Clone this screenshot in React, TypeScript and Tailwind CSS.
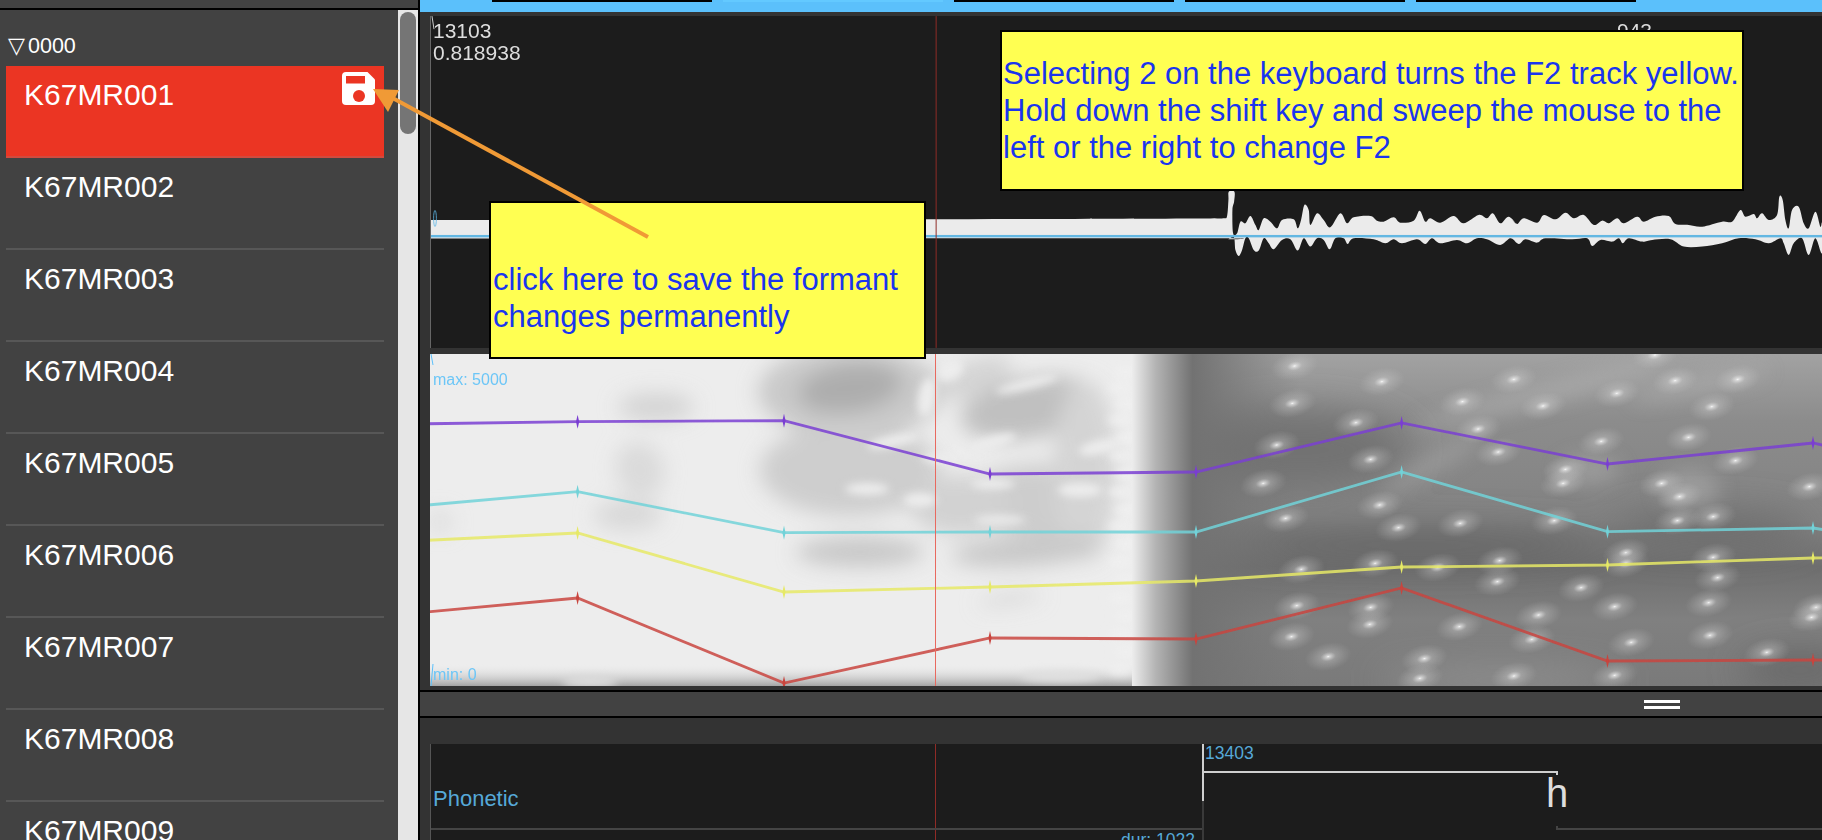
import React from 'react';

const FONT = "font-['Liberation_Sans',Arial,sans-serif]";

const names = ['K67MR001', 'K67MR002', 'K67MR003', 'K67MR004', 'K67MR005', 'K67MR006', 'K67MR007', 'K67MR008', 'K67MR009'];

// waveform envelopes, read off the picture: [x, y] in 3x crop coords
const topA = [[0,85],[40,85],[50,78],[54,30],[55,5],[72,5],[71,35],[66,60],[68,130],[80,130],[90,95],[105,100],[120,78],[135,105],[145,120],[160,85],[180,95],[200,115],[215,90],[250,88],[262,115],[272,90],[282,45],[295,60],[300,105],[320,70],[340,90],[360,112],[390,70],[410,100],[430,82],[480,78],[500,92],[520,95],[550,82],[570,98],[610,92],[628,62],[645,95],[660,85],[690,98],[730,78],[760,100],[805,75],[830,85],[848,70],[870,100],[895,80],[920,102]];
const topB = [[0,88],[15,102],[35,85],[75,98],[95,75],[130,88],[160,68],[185,85],[215,75],[245,105],[270,92],[290,100],[315,85],[335,100],[375,80],[395,95],[430,80],[470,78],[490,102],[530,105],[570,110],[630,95],[660,95],[685,60],[700,80],[725,72],[735,85],[750,70],[770,90],[795,75],[802,20],[812,30],[820,90],[830,115],[840,60],[860,50],[875,100],[890,115],[910,65],[925,110],[930,100]];
const botA = [[0,145],[50,148],[70,140],[75,180],[85,198],[95,180],[105,145],[115,145],[130,180],[145,182],[160,145],[175,160],[190,178],[215,150],[240,148],[262,182],[280,145],[300,170],[320,145],[340,150],[358,178],[375,145],[400,145],[412,162],[430,145],[490,148],[525,160],[550,148],[575,160],[620,148],[645,162],[665,145],[690,160],[740,150],[770,160],[800,145],[830,148],[870,165],[900,145],[920,160]];
const botB = [[0,145],[20,162],[40,148],[75,158],[100,145],[180,148],[225,145],[240,168],[265,150],[300,155],[320,145],[332,160],[350,145],[390,155],[420,150],[475,148],[515,170],[570,170],[630,160],[680,145],[730,148],[770,160],[805,145],[815,160],[830,195],[845,160],[870,145],[890,195],[910,145],[930,190]];

const toPx = (pts: number[][], ox: number) => pts.map(([x, y]) => [ox + x / 3, 190 + y / 3]);

// catmull-rom outline so the curve still reaches every peak
function smoothPath(pts: number[][]) {
  let d = `M${pts[0][0]},${pts[0][1]}`;
  for (let i = 0; i < pts.length - 1; i++) {
    const p0 = pts[Math.max(i - 1, 0)];
    const p1 = pts[i];
    const p2 = pts[i + 1];
    const p3 = pts[Math.min(i + 2, pts.length - 1)];
    const c1 = [p1[0] + (p2[0] - p0[0]) / 6, p1[1] + (p2[1] - p0[1]) / 6];
    const c2 = [p2[0] - (p3[0] - p1[0]) / 6, p2[1] - (p3[1] - p1[1]) / 6];
    d += ` C${c1[0]},${c1[1]} ${c2[0]},${c2[1]} ${p2[0]},${p2[1]}`;
  }
  return `${d} Z`;
}

const wavePath = smoothPath([
  [430, 220],
  [820, 219.5],
  [1210, 218.5],
  ...toPx(topA, 1210),
  ...toPx(topB, 1512),
  ...toPx(botB, 1512).reverse(),
  ...toPx(botA, 1210).reverse(),
  [820, 238.5],
  [430, 238.5],
]);

const formantX = [372, 577.6, 784, 990, 1196, 1401.6, 1607.5, 1813, 2019];
const formants = [
  { color: '#7a3ed2', ys: [424.5, 421.7, 420.7, 474, 472, 423, 464, 443, 490] },
  { color: '#72d2d8', ys: [510, 491.7, 532.7, 532, 532, 472, 531.7, 528, 560] },
  { color: '#e6e966', ys: [543, 533, 592, 587, 581, 567, 565, 558, 556] },
  { color: '#c9443e', ys: [617, 598, 683, 638, 639, 588, 661, 660, 664] },
];

// gray clouds in the light part of the spectrogram: cx cy rx ry fill rotate
const clouds: [number, number, number, number, string, number][] = [
  [850, 392, 92, 46, '#c9c9c9', 0],
  [850, 388, 52, 24, '#adadad', -8],
  [850, 470, 90, 46, '#cecece', 0],
  [860, 552, 64, 15, '#c8c8c8', 0],
  [1030, 408, 70, 30, '#c0c0c0', -10],
  [975, 378, 40, 18, '#d4d4d4', -20],
  [1040, 500, 74, 36, '#cdcdcd', 0],
  [960, 505, 50, 30, '#d2d2d2', 0],
  [1085, 470, 32, 90, '#d4d4d4', 0],
  [1027, 551, 76, 15, '#c8c8c8', -4],
  [1010, 599, 32, 5, '#d6d6d6', -8],
  [656, 407, 38, 14, '#d4d4d4', 0],
  [640, 470, 24, 28, '#dadada', -20],
  [628, 515, 34, 15, '#d8d8d8', 0],
  [440, 522, 12, 10, '#dcdcdc', 0],
];

const holes: [number, number, number, number, number][] = [
  [867, 489, 22, 6, 0],
  [893, 441, 26, 6, -12],
  [920, 500, 17, 7, 0],
  [927, 397, 9, 20, 10],
  [1027, 384, 32, 5, -14],
  [993, 442, 24, 6, -15],
  [1100, 447, 22, 7, -12],
  [993, 484, 22, 5, 0],
  [1080, 490, 22, 7, 0],
  [940, 458, 18, 5, 0],
  [1000, 520, 26, 4, 0],
  [950, 370, 14, 10, -30],
];

// bright specks in the voiced part, in crop coords of the right half
const specks = [[390,48],[585,95],[880,88],[1240,92],[1380,88],[1195,15],[385,160],[765,155],[945,168],[1110,130],[1322,170],[527,218],[800,237],[1075,274],[1270,262],[350,285],[845,306],[560,328],[1375,332],[995,358],[320,400],[990,400],[1210,400],[1540,410],[1250,440],[580,465],[370,505],[970,512],[1245,512],[1325,500],[622,533],[760,520],[1130,608],[1325,622],[1130,640],[405,658],[570,640],[848,632],[710,652],[1335,683],[843,695],[1030,713],[395,767],[560,772],[935,795],[1105,770],[1315,758],[1555,772],[1545,802],[558,823],[758,830],[383,860],[920,868],[1142,877],[1318,856],[465,920],[680,926],[1445,907],[670,985],[880,978],[1105,976]];

const lumps = [372, 388, 404, 420, 438, 456, 474, 492, 510, 526, 544, 562, 580, 598, 616, 634, 652, 670];

function Spectrogram() {
  return (
    <svg className="absolute inset-0 w-full h-full" viewBox="430 354 1392 332">
      <defs>
        <filter id="soft" x="-40%" y="-80%" width="180%" height="260%"><feGaussianBlur stdDeviation="10" /></filter>
        <filter id="b4" x="-40%" y="-80%" width="180%" height="260%"><feGaussianBlur stdDeviation="4" /></filter>
        <filter id="wide" x="-40%" y="-80%" width="180%" height="260%"><feGaussianBlur stdDeviation="18" /></filter>
        <filter id="line" x="-5%" y="-5%" width="110%" height="110%"><feGaussianBlur stdDeviation="0.6" /></filter>
        <linearGradient id="voiced" x1="0" y1="0" x2="0" y2="1">
          <stop offset="0" stopColor="#a2a2a2" />
          <stop offset="0.2" stopColor="#8c8c8c" />
          <stop offset="0.5" stopColor="#828282" />
          <stop offset="0.64" stopColor="#6e6e6e" />
          <stop offset="0.8" stopColor="#808080" />
          <stop offset="1" stopColor="#7a7a7a" />
        </linearGradient>
        <linearGradient id="edge" gradientUnits="userSpaceOnUse" x1="1132" y1="0" x2="1300" y2="0">
          <stop offset="0" stopColor="#ededed" />
          <stop offset="0.14" stopColor="#b4b4b4" />
          <stop offset="0.36" stopColor="#727272" />
          <stop offset="1" stopColor="#727272" stopOpacity="0" />
        </linearGradient>
        <linearGradient id="floor" x1="0" y1="0" x2="0" y2="1">
          <stop offset="0" stopColor="#ededed" stopOpacity="0" />
          <stop offset="1" stopColor="#a4a4a4" />
        </linearGradient>
        <radialGradient id="speck">
          <stop offset="0" stopColor="#ffffff" stopOpacity="0.95" />
          <stop offset="0.07" stopColor="#eeeeee" stopOpacity="0.75" />
          <stop offset="0.32" stopColor="#dddddd" stopOpacity="0.3" />
          <stop offset="1" stopColor="#cccccc" stopOpacity="0" />
        </radialGradient>
      </defs>
      <rect x="430" y="354" width="1392" height="332" fill="#ededed" />
      <g filter="url(#soft)">
        {clouds.map(([cx, cy, rx, ry, fill, r], i) => (
          <ellipse key={i} cx={cx} cy={cy} rx={rx} ry={ry} fill={fill} transform={`rotate(${r} ${cx} ${cy})`} />
        ))}
      </g>
      <g filter="url(#b4)">
        {holes.map(([cx, cy, rx, ry, r], i) => (
          <ellipse key={i} cx={cx} cy={cy} rx={rx} ry={ry} fill="#ededed" transform={`rotate(${r} ${cx} ${cy})`} />
        ))}
      </g>
      <rect x="430" y="664" width="720" height="22" fill="url(#floor)" />
      <g filter="url(#b4)">
        <ellipse cx="590" cy="682" rx="28" ry="6" fill="#dedede" />
        <ellipse cx="1060" cy="676" rx="40" ry="6" fill="#e0e0e0" />
      </g>
      <g filter="url(#b4)">
        {lumps.map((y, i) => (
          <ellipse key={y} cx={i % 2 ? 1120 : 1126} cy={y} rx="12" ry="5" fill="#f0f0f0" />
        ))}
      </g>
      <rect x="1132" y="354" width="690" height="332" fill="url(#voiced)" />
      <g filter="url(#wide)">
        <ellipse cx="1300" cy="450" rx="110" ry="40" fill="#727272" />
        <ellipse cx="1420" cy="545" rx="190" ry="14" fill="#646464" />
        <ellipse cx="1800" cy="670" rx="60" ry="18" fill="#666666" />
        <ellipse cx="1710" cy="530" rx="100" ry="18" fill="#6c6c6c" />
        <ellipse cx="1500" cy="680" rx="120" ry="12" fill="#949494" />
      </g>
      <g filter="url(#soft)" opacity="0.5">
        <ellipse cx="1540" cy="395" rx="130" ry="9" fill="#bdbdbd" transform="rotate(-14 1540 395)" />
        <ellipse cx="1700" cy="385" rx="70" ry="7" fill="#bdbdbd" transform="rotate(-12 1700 385)" />
        <ellipse cx="1430" cy="465" rx="60" ry="8" fill="#b0b0b0" transform="rotate(-30 1430 465)" />
        <ellipse cx="1690" cy="490" rx="30" ry="20" fill="#b4b4b4" />
        <ellipse cx="1590" cy="470" rx="30" ry="14" fill="#b0b0b0" />
      </g>
      <rect x="1132" y="354" width="168" height="332" fill="url(#edge)" />
      {specks.map(([zx, zy], i) => {
        const cx = 1120 + zx / 2.234;
        const cy = 350 + zy / 3;
        return <ellipse key={i} cx={cx} cy={cy} rx="24" ry="14" fill="url(#speck)" transform={`rotate(-12 ${cx} ${cy})`} />;
      })}
      <g filter="url(#line)">
        {formants.map((f) => (
          <g key={f.color}>
            <polyline
              points={f.ys.map((y, i) => `${formantX[i]},${y}`).join(' ')}
              fill="none"
              stroke={f.color}
              strokeWidth="2.8"
              opacity="0.85"
            />
            {f.ys.map((y, i) => (
              <polygon
                key={i}
                points={`${formantX[i]},${y - 7} ${formantX[i] + 1.6},${y} ${formantX[i]},${y + 7} ${formantX[i] - 1.6},${y}`}
                fill={f.color}
              />
            ))}
          </g>
        ))}
      </g>
      <line x1="935.5" y1="354" x2="935.5" y2="686" stroke="#e8695f" strokeWidth="1" />
      <line x1="431" y1="354" x2="433" y2="365" stroke="#5bc0fb" strokeWidth="1" />
      <line x1="433" y1="664" x2="431" y2="686" stroke="#5bc0fb" strokeWidth="1" />
    </svg>
  );
}

function Waveform() {
  return (
    <svg className="absolute inset-0 w-full h-full" viewBox="430 16 1392 332">
      <defs>
        <filter id="wave" x="-2%" y="-20%" width="104%" height="140%"><feGaussianBlur stdDeviation="0.6" /></filter>
      </defs>
      <path d={wavePath} fill="#ebebeb" filter="url(#wave)" />
      <rect x="430" y="235" width="1392" height="2.4" fill="#63b7e2" />
      <ellipse cx="434" cy="218.5" rx="1.4" ry="8" fill="none" stroke="#5bb5e6" strokeWidth="0.8" />
      <line x1="431" y1="16" x2="433" y2="29" stroke="#cccccc" strokeWidth="1" />
      <line x1="935.5" y1="16" x2="935.5" y2="348" stroke="#8f2b27" strokeWidth="1" />
    </svg>
  );
}

function SaveIcon() {
  return (
    <svg viewBox="0 0 33 33" className="w-[33px] h-[33px]">
      <path d="M4 0H25.5L33 7.5V29a4 4 0 0 1-4 4H4a4 4 0 0 1-4-4V4a4 4 0 0 1 4-4Z" fill="#fff" />
      <rect x="4" y="4" width="19" height="7.5" fill="#eb3523" />
      <circle cx="17" cy="24" r="6" fill="#eb3523" />
    </svg>
  );
}

function Note({ className, lines }: { className: string; lines: string[] }) {
  return (
    <div className={`absolute bg-[#ffff52] border-[2px] border-black text-[#1a35ee] text-[31px] leading-[37px] whitespace-nowrap ${className}`}>
      {lines.map((line) => (
        <div key={line}>{line}</div>
      ))}
    </div>
  );
}

export default function App() {
  return (
    <div className={`relative flex w-[1822px] h-[840px] overflow-hidden bg-[#333333] ${FONT}`}>
      {/* file list */}
      <aside className="w-[420px] h-full flex flex-col shrink-0 border-r-2 border-black bg-[#424242]">
        <div className="h-[10px] shrink-0 border-b-2 border-black" />
        <div className="flex flex-1 min-h-0">
          <div className="flex-1 min-w-0 overflow-hidden px-[6px] pr-[14px] text-white">
            <div className="h-[56px] flex items-end pb-[7px] pl-[2px] text-[21.5px] leading-[26px]">
              <span className="mr-[3px]">▽</span>
              <span>0000</span>
            </div>
            {names.map((name, i) => (
              <div
                key={name}
                className={`relative h-[92px] pl-[18px] pt-[11px] text-[30px] leading-[36px] border-b-2 ${
                  i === 0 ? 'bg-[#eb3523] border-[#d14a3e]' : 'border-[#575757]'
                }`}
              >
                {name}
                {i === 0 && (
                  <div className="absolute top-[6px] right-[9px]">
                    <SaveIcon />
                  </div>
                )}
              </div>
            ))}
          </div>
          <div className="w-[20px] shrink-0 bg-[#e6e6e6] pt-[2px] px-[2px]">
            <div className="h-[122px] rounded-full bg-[#757575]" />
          </div>
        </div>
      </aside>

      {/* tracks */}
      <main className="flex-1 min-w-0 flex flex-col">
        <div className="h-[12px] shrink-0 bg-[#5bc0fb] pl-[72px] flex gap-[11px]">
          <div className="w-[220px] h-[2px] bg-black" />
          <div className="w-[220px] h-[2px] bg-[#63c9ff]" />
          <div className="w-[220px] h-[2px] bg-black" />
          <div className="w-[220px] h-[2px] bg-black" />
          <div className="w-[220px] h-[2px] bg-black" />
        </div>
        <div className="h-[4px] shrink-0" />
        <div className="h-[332px] shrink-0 pl-[10px]">
          <div className="relative h-full bg-[#1c1c1c] border-l border-[#666666] overflow-hidden text-[21px] leading-[22px] text-[#dddddd]">
            <Waveform />
            <div className="absolute left-[2px] top-[4px] blur-[0.5px]">
              <div>13103</div>
              <div>0.818938</div>
            </div>
            <div className="absolute left-[1186px] top-[4px] blur-[0.5px]">943</div>
          </div>
        </div>
        <div className="h-[6px] shrink-0" />
        <div className="h-[332px] shrink-0 pl-[10px]">
          <div className="relative h-full overflow-hidden">
            <Spectrogram />
            <div className="absolute left-[3px] top-[17px] text-[16px] leading-[18px] text-[#6cc6f7] blur-[0.5px]">max: 5000</div>
            <div className="absolute left-[3px] bottom-[2px] text-[16px] leading-[18px] text-[#6cc6f7] blur-[0.5px]">min: 0</div>
          </div>
        </div>
        <div className="h-[4px] shrink-0" />
        <div className="h-[28px] shrink-0 border-y-2 border-black bg-[#424242] flex flex-col items-end justify-center gap-[3px] pr-[142px]">
          <div className="w-[36px] h-[3px] bg-white" />
          <div className="w-[36px] h-[3px] bg-white" />
        </div>
        <div className="h-[26px] shrink-0" />
        <div className="ml-[10px] flex-1 min-h-0 relative bg-[#1c1c1c] border-l border-[#555555] overflow-hidden">
          <div className="absolute left-[504px] top-0 bottom-0 w-px bg-[#8f2b27]" />
          <div className="absolute left-[2px] top-[43px] text-[22px] leading-[24px] text-[#56a9d8]">Phonetic</div>
          <div className="absolute left-0 top-[84px] w-[772px] h-[2px] bg-[#444444]" />
          <div className="absolute left-[690px] w-[74px] top-[86px] text-[17.5px] leading-[20px] text-right text-[#56a9d8]">dur: 1022</div>
          <div className="absolute left-[771px] top-0 bottom-0 w-[2px] bg-[#3a3a3a]" />
          <div className="absolute left-[771px] top-0 h-[57px] w-[2px] bg-[#cfcfcf]" />
          <div className="absolute left-[774px] top-0 text-[17.5px] leading-[18px] text-[#56a9d8]">13403</div>
          <div className="absolute left-[771px] top-[27px] w-[355px] h-[2px] bg-[#cfcfcf]" />
          <div className="absolute left-[1125px] top-[27px] w-[2px] h-[4px] bg-[#cfcfcf]" />
          <div className="absolute left-[1113px] top-[26px] w-[26px] text-center text-[40px] leading-[46px] text-[#dddddd]">h</div>
          <div className="absolute left-[1125px] top-[84px] right-0 h-[2px] bg-[#444444]" />
          <div className="absolute left-[1125px] top-[82px] w-[2px] h-[3px] bg-[#444444]" />
        </div>
      </main>

      {/* annotations on top of the screenshot */}
      <Note className="left-[489px] top-[201px] w-[437px] h-[158px] pl-[2px] pt-[58px]" lines={['click here to save the formant', 'changes permanently']} />
      <Note className="left-[1000px] top-[30px] w-[744px] h-[161px] pl-[1px] pt-[23px]" lines={['Selecting 2 on the keyboard turns the F2 track yellow.', 'Hold down the shift key and sweep the mouse to the', 'left or the right to change F2']} />
      <svg className="absolute inset-0 w-[1822px] h-[840px] pointer-events-none" viewBox="0 0 1822 840">
        <line x1="388" y1="95.5" x2="648" y2="237" stroke="#f09a36" strokeWidth="4" />
        <polygon points="373,89 399,90 388,112" fill="#f09a36" />
      </svg>
    </div>
  );
}
